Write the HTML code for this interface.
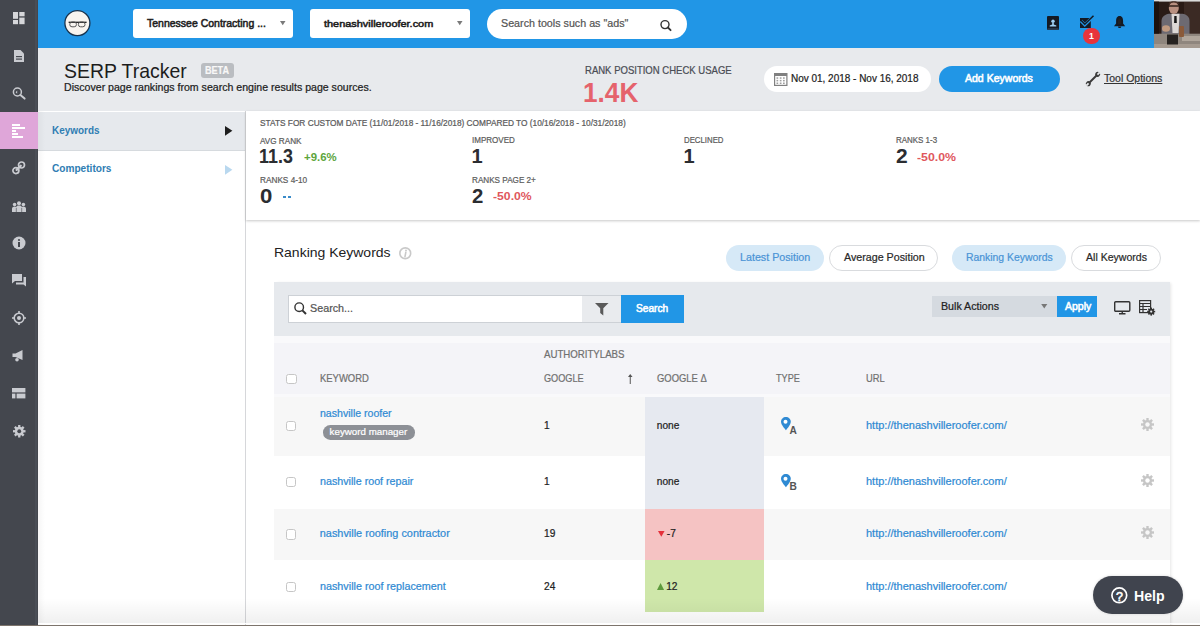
<!DOCTYPE html>
<html><head><meta charset="utf-8"><title>SERP Tracker</title>
<style>
html,body{margin:0;padding:0;width:1200px;height:626px;overflow:hidden;background:#fff;font-family:"Liberation Sans", sans-serif;}
.t{position:absolute;white-space:nowrap;line-height:1;transform-origin:0 0;}
.b{position:absolute;box-sizing:border-box;}
svg{position:absolute;overflow:visible;}
</style></head><body>
<div class="b" style="left:0px;top:0px;width:38px;height:626px;background:#44474e"></div>
<div class="b" style="left:35px;top:0px;width:2px;height:626px;background:#4a4e56"></div>
<div class="b" style="left:38px;top:0px;width:1162px;height:48px;background:#2196e6"></div>
<div class="b" style="left:38px;top:48px;width:1162px;height:63px;background:#e8eaed"></div>
<div class="b" style="left:38px;top:111px;width:208px;height:515px;background:#fff;border-right:1px solid #d6d7da"></div>
<div class="b" style="left:38px;top:112px;width:207px;height:39px;background:#e6e9ed;border-bottom:1px solid #d6dade"></div>
<div class="b" style="left:38px;top:111px;width:7px;height:515px;background:linear-gradient(90deg,rgba(0,0,0,0.035),rgba(0,0,0,0))"></div>
<div class="b" style="left:246px;top:111px;width:954px;height:109px;background:#fff;box-shadow:0 1px 2.5px rgba(0,0,0,.22)"></div>
<div class="b" style="left:0px;top:112px;width:38px;height:37px;background:#dfa6d9"></div>
<svg style="left:12.75px;top:11.8px" width="11.6" height="12.2" viewBox="0 0 11.6 12.2"><g fill="#d6d7da"><rect x="0" y="0" width="5" height="6.8"/><rect x="6.3" y="0" width="5.3" height="4.3"/><rect x="0" y="8" width="5" height="4.2"/><rect x="6.3" y="5.6" width="5.3" height="6.6"/></g></svg>
<svg style="left:14px;top:50px" width="10" height="12" viewBox="0 0 10 12"><path d="M0 0H6.5L10 3.5V12H0Z" fill="#c9cbd0"/><rect x="2" y="6" width="6" height="1.2" fill="#44474e"/><rect x="2" y="8.5" width="6" height="1.2" fill="#44474e"/></svg>
<svg style="left:12px;top:86px" width="14" height="14" viewBox="0 0 14 14"><circle cx="5.4" cy="6" r="4" fill="none" stroke="#c9cbd0" stroke-width="1.5"/><path d="M8.4 9L12.6 12.6" stroke="#c9cbd0" stroke-width="2" stroke-linecap="round"/><path d="M3.6 6.2L5.2 4.6V7.8Z" fill="#c9cbd0"/></svg>
<svg style="left:12px;top:124px" width="13" height="14" viewBox="0 0 13 14"><rect x="0" y="0" width="8" height="2" fill="#fff"/><rect x="0" y="3" width="13" height="2" fill="#fff"/><rect x="0" y="6" width="4" height="2" fill="#fff"/><rect x="0" y="9" width="6" height="2" fill="#fff"/><rect x="0" y="12" width="11" height="2" fill="#fff"/></svg>
<svg style="left:12px;top:161px" width="14" height="14" viewBox="0 0 14 14"><g fill="none" stroke="#c9cbd0" stroke-width="1.7"><circle cx="3.9" cy="9.6" r="3"/><circle cx="9.5" cy="4" r="3"/></g><path d="M4.6 8.9L8.8 4.7" stroke="#c9cbd0" stroke-width="2.2" stroke-linecap="round"/></svg>
<svg style="left:11.5px;top:200.8px" width="14" height="11" viewBox="0 0 14 11"><g fill="#c9cbd0"><circle cx="2.6" cy="3.6" r="1.8"/><circle cx="7" cy="2.2" r="2"/><circle cx="11.4" cy="3.6" r="1.8"/><path d="M0 11V7.6C0 6.4 1 5.8 2.6 5.8C4.2 5.8 5 6.4 5 7.6V11Z"/><path d="M9 11V7.6C9 6.4 9.8 5.8 11.4 5.8C13 5.8 14 6.4 14 7.6V11Z"/><path d="M4.2 11V6.4C4.2 5 5.2 4.4 7 4.4C8.8 4.4 9.8 5 9.8 6.4V11Z"/></g><path d="M4.3 7V11M9.7 7V11" stroke="#44474e" stroke-width="0.6"/></svg>
<svg style="left:12px;top:236px" width="14" height="14" viewBox="0 0 14 14"><circle cx="7" cy="7" r="6.5" fill="#c9cbd0"/><rect x="6" y="6" width="2" height="5" fill="#44474e"/><circle cx="7" cy="4" r="1.1" fill="#44474e"/></svg>
<svg style="left:12px;top:274px" width="14" height="13" viewBox="0 0 14 13"><path d="M0 0H10V7H3L0 9.5Z" fill="#c9cbd0"/><path d="M11.5 3H14V12.5L11.5 10.5H4V8.5H11.5Z" fill="#c9cbd0"/></svg>
<svg style="left:12px;top:311px" width="14" height="14" viewBox="0 0 14 14"><circle cx="7" cy="7" r="4.8" fill="none" stroke="#c9cbd0" stroke-width="1.6"/><circle cx="7" cy="7" r="2" fill="#c9cbd0"/><path d="M7 0V2.5M7 11.5V14M0 7H2.5M11.5 7H14" stroke="#c9cbd0" stroke-width="1.6"/></svg>
<svg style="left:12px;top:350px" width="13" height="12" viewBox="0 0 13 12"><path d="M0.5 3.5H3.5L10.5 0V10L3.5 7H0.5Z" fill="#c9cbd0"/><circle cx="5" cy="9.8" r="1.8" fill="#c9cbd0"/></svg>
<svg style="left:12px;top:387.8px" width="13.4" height="10.4" viewBox="0 0 13.4 10.4"><rect x="0" y="0" width="13.4" height="4.4" fill="#c9cbd0"/><rect x="0" y="5.6" width="3.4" height="4.8" fill="#c9cbd0"/><rect x="4.6" y="5.6" width="8.8" height="4.8" fill="#c9cbd0"/></svg>
<svg style="left:12.5px;top:424.5px" width="12.5" height="12.5" viewBox="0 0 13 13"><g fill="#c9cbd0"><circle cx="6.5" cy="6.5" r="4.6"/><rect x="5.3" y="0" width="2.4" height="13"/><rect x="5.3" y="0" width="2.4" height="13" transform="rotate(45 6.5 6.5)"/><rect x="5.3" y="0" width="2.4" height="13" transform="rotate(90 6.5 6.5)"/><rect x="5.3" y="0" width="2.4" height="13" transform="rotate(135 6.5 6.5)"/></g><circle cx="6.5" cy="6.5" r="2" fill="#44474e"/></svg>
<svg style="left:64px;top:10px" width="27" height="27" viewBox="0 0 27 27"><circle cx="13.4" cy="13.1" r="12.5" fill="#f8f4ef" stroke="#17324d" stroke-width="1.3"/><path d="M4.6 12.3H22.6" stroke="#1e1e1e" stroke-width="1.3"/><rect x="5.8" y="12" width="6.6" height="4.8" rx="2.2" fill="none" stroke="#555" stroke-width="1"/><rect x="14.4" y="12" width="6.6" height="4.8" rx="2.2" fill="none" stroke="#555" stroke-width="1"/></svg>
<div class="b" style="left:133px;top:9px;width:160px;height:29px;background:#fff;border-radius:3px"></div>
<div class="t" style="left:146.90px;top:18.00px;font-size:11.05px;font-weight:400;color:#1f1f1f;transform:scaleX(0.9494);-webkit-text-stroke:0.55px #1f1f1f;">Tennessee Contracting ...</div>
<svg style="left:280px;top:21px" width="5.5" height="4.3" viewBox="0 0 8 6"><path d="M0 0H8L4 6Z" fill="#7a7a7a"/></svg>
<div class="b" style="left:310px;top:9px;width:160px;height:29px;background:#fff;border-radius:3px"></div>
<div class="t" style="left:324.10px;top:19.00px;font-size:9.92px;font-weight:400;color:#1f1f1f;transform:scaleX(1.1025);-webkit-text-stroke:0.55px #1f1f1f;">thenashvilleroofer.com</div>
<svg style="left:457.4px;top:21.3px" width="5.5" height="4.3" viewBox="0 0 8 6"><path d="M0 0H8L4 6Z" fill="#7a7a7a"/></svg>
<div class="b" style="left:487px;top:9px;width:200px;height:30px;background:#fff;border-radius:15px"></div>
<div class="t" style="left:500.80px;top:18.00px;font-size:11.05px;font-weight:400;color:#555;transform:scaleX(0.9698);-webkit-text-stroke:0.22px #555;">Search tools such as "ads"</div>
<svg style="left:660px;top:19.5px" width="13" height="10.5" viewBox="0 0 13 10.5"><circle cx="5" cy="4.6" r="4" fill="none" stroke="#333" stroke-width="1.4"/><path d="M7.9 7.5L10.6 10.2" stroke="#333" stroke-width="1.8" stroke-linecap="round"/></svg>
<svg style="left:1047px;top:15.5px" width="12" height="14" viewBox="0 0 12 14"><rect x="0" y="0" width="12" height="14" rx="1" fill="#141a24"/><rect x="0.5" y="12.6" width="11" height="0.9" fill="#3a5a7a"/><circle cx="6" cy="5.2" r="1.7" fill="#9fd0f4"/><path d="M5.2 6.8H6.8V8.6L9.3 9.6V10.6H2.7V9.6L5.2 8.6Z" fill="#9fd0f4"/></svg>
<svg style="left:1079.5px;top:15.5px" width="14" height="12.5" viewBox="0 0 14 12.5"><rect x="0" y="2" width="10.8" height="10" fill="#141a24"/><path d="M1 4.8L4.8 8.8L13.2 0.6" fill="none" stroke="#2196e6" stroke-width="3.2"/><path d="M1 4.2L4.8 8.2L13.5 -0.3" fill="none" stroke="#141a24" stroke-width="1.5"/></svg>
<div class="b" style="left:1083.2px;top:27.8px;width:16.5px;height:16.5px;background:#e8343c;border-radius:50%"></div>
<div class="t" style="left:1089.00px;top:32.00px;font-size:8.72px;font-weight:700;color:#fff;">1</div>
<svg style="left:1114px;top:15.9px" width="11.2" height="12" viewBox="0 0 11.2 12"><path d="M5.6 0C8.3 0 9.1 2.4 9.1 5V7.6L11.2 10.2H0L2.1 7.6V5C2.1 2.4 2.9 0 5.6 0Z" fill="#141a24"/><path d="M4 10.5H7.2C7.2 11.5 6.5 12 5.6 12C4.7 12 4 11.5 4 10.5Z" fill="#141a24"/><path d="M5.6 2.5C7 2.5 7.2 4 7.2 5.5V8H4V5.5C4 4 4.2 2.5 5.6 2.5Z" fill="#2a241f" opacity="0.6"/></svg>
<svg style="left:1154px;top:0px" width="46" height="48" viewBox="0 0 46 48">
<rect width="46" height="48" fill="#2a1b16"/>
<rect x="30" y="2" width="16" height="32" fill="#3b2a24"/>
<rect x="0" y="0" width="46" height="1.6" fill="#dcdcdc"/>
<path d="M7.5 34V21C7.5 16.5 11 14.5 15 13.8H28.5C32.5 14.5 35.5 16.5 35.5 21V34Z" fill="#6d6a72"/>
<path d="M17.5 13.8H25.5L24.5 33H18.5Z" fill="#dcd8d6"/>
<path d="M20.3 16H22.6L22.8 23H20.1Z" fill="#161616"/>
<ellipse cx="19.8" cy="8" rx="5" ry="6" fill="#b89080"/>
<rect x="14.8" y="5.2" width="10" height="1.6" fill="#3a2a22"/>
<path d="M14.8 5C15 1.5 24.6 1.5 24.8 5V3C23 0.8 16.6 0.8 14.8 3Z" fill="#4a3228"/>
<rect x="0" y="33.7" width="46" height="14.3" fill="#8f867e"/>
<rect x="28" y="36" width="18" height="5" fill="#b0a69c"/>
<rect x="0" y="44" width="46" height="4" fill="#a59a90"/>
<rect x="13" y="34.5" width="11" height="10" fill="#262220"/>
<ellipse cx="12" cy="28.5" rx="4" ry="3.2" fill="#c09a80"/>
<rect x="25" y="26" width="5" height="11" rx="1" fill="#8a5a3a"/>
<rect x="0" y="1.6" width="5" height="32" fill="#1c120e"/>
</svg>
<div class="t" style="left:63.70px;top:61.00px;font-size:20.49px;font-weight:400;color:#1c1c1c;transform:scaleX(0.9485);">SERP Tracker</div>
<div class="b" style="left:201px;top:63px;width:32.5px;height:14.5px;background:#babdc1;border-radius:3px"></div>
<div class="t" style="left:205.30px;top:66.00px;font-size:10.47px;font-weight:700;color:#f8f8f8;transform:scaleX(0.8674);-webkit-text-stroke:0.2px #f8f8f8">BETA</div>
<div class="t" style="left:63.75px;top:83.00px;font-size:10.17px;font-weight:400;color:#222;transform:scaleX(1.0419);-webkit-text-stroke:0.22px #222;">Discover page rankings from search engine results page sources.</div>
<div class="t" style="left:584.80px;top:66.00px;font-size:10.32px;font-weight:400;color:#4a4d55;transform:scaleX(0.9242);-webkit-text-stroke:0.22px #4a4d55;">RANK POSITION CHECK USAGE</div>
<div class="t" style="left:583.46px;top:79.00px;font-size:27.76px;font-weight:700;color:#e5636c;transform:scaleX(0.9448);">1.4K</div>
<div class="b" style="left:764px;top:66px;width:167px;height:26px;background:#fff;border-radius:13px"></div>
<svg style="left:774px;top:73px" width="13.5" height="13" viewBox="0 0 13.5 13"><rect x="0.6" y="0.6" width="12.3" height="11.8" fill="#fff" stroke="#808080" stroke-width="1.2"/><rect x="0.6" y="0.6" width="12.3" height="2.4" fill="#808080"/><g fill="#a0a0a0"><rect x="2.5" y="4.3" width="1.7" height="1.5"/><rect x="5.8" y="4.3" width="1.7" height="1.5"/><rect x="9" y="4.3" width="1.7" height="1.5"/><rect x="2.5" y="6.9" width="1.7" height="1.5"/><rect x="5.8" y="6.9" width="1.7" height="1.5"/><rect x="9" y="6.9" width="1.7" height="1.5"/><rect x="2.5" y="9.5" width="1.7" height="1.5"/><rect x="5.8" y="9.5" width="1.7" height="1.5"/><rect x="9" y="9.5" width="1.7" height="1.5"/></g></svg>
<div class="t" style="left:790.50px;top:74.00px;font-size:10.32px;font-weight:400;color:#222;transform:scaleX(0.9664);-webkit-text-stroke:0.22px #222;">Nov 01, 2018 - Nov 16, 2018</div>
<div class="b" style="left:938.5px;top:66px;width:121.5px;height:26px;background:#2196e6;border-radius:13px"></div>
<div class="t" style="left:965.40px;top:73.00px;font-size:10.76px;font-weight:400;color:#fff;transform:scaleX(0.9791);-webkit-text-stroke:0.55px #fff;">Add Keywords</div>
<svg style="left:1086px;top:72px" width="14" height="14" viewBox="0 0 14 14"><g transform="translate(7 7) rotate(-45)"><rect x="-6" y="-0.95" width="12" height="1.9" fill="#3a3a3a"/><circle cx="-6.6" cy="0" r="2.5" fill="#3a3a3a"/><circle cx="6.6" cy="0" r="2.5" fill="#3a3a3a"/><rect x="-9.5" y="-0.9" width="3.2" height="1.8" fill="#e8eaed"/><rect x="6.3" y="-0.9" width="3.2" height="1.8" fill="#e8eaed"/></g></svg>
<div class="t" style="left:1103.80px;top:73.00px;font-size:10.61px;font-weight:400;color:#333;transform:scaleX(0.9886);-webkit-text-stroke:0.22px #333;text-decoration:underline;text-underline-offset:1px">Tool Options</div>
<div class="t" style="left:51.70px;top:126.00px;font-size:10.47px;font-weight:700;color:#2f7db3;transform:scaleX(0.9492);">Keywords</div>
<svg style="left:224.8px;top:126.3px" width="7.4" height="9.7" viewBox="0 0 7.4 9.7"><path d="M0 0L7.4 4.85L0 9.7Z" fill="#1e1e1e"/></svg>
<div class="t" style="left:51.70px;top:164.00px;font-size:10.17px;font-weight:700;color:#2f7db3;transform:scaleX(0.9940);">Competitors</div>
<svg style="left:224.8px;top:164.8px" width="7.4" height="9.7" viewBox="0 0 7.4 9.7"><path d="M0 0L7.4 4.85L0 9.7Z" fill="#b9d8ef"/></svg>
<div class="t" style="left:259.80px;top:120.00px;font-size:8.14px;font-weight:400;color:#5c5c5c;transform:scaleX(1.0213);-webkit-text-stroke:0.22px #5c5c5c;">STATS FOR CUSTOM DATE (11/01/2018 - 11/16/2018) COMPARED TO (10/16/2018 - 10/31/2018)</div>
<div class="t" style="left:259.80px;top:137.00px;font-size:8.58px;font-weight:400;color:#5c5c5c;transform:scaleX(0.9498);-webkit-text-stroke:0.22px #5c5c5c;">AVG RANK</div>
<div class="t" style="left:259.11px;top:146.00px;font-size:20.06px;font-weight:700;color:#2b2d31;transform:scaleX(0.8922);">11.3</div>
<div class="t" style="left:303.50px;top:152.00px;font-size:10.90px;font-weight:700;color:#5da53c;transform:scaleX(1.0476);">+9.6%</div>
<div class="t" style="left:471.60px;top:136.00px;font-size:8.58px;font-weight:400;color:#5c5c5c;transform:scaleX(0.9365);-webkit-text-stroke:0.22px #5c5c5c;">IMPROVED</div>
<div class="t" style="left:471.50px;top:146.00px;font-size:20.06px;font-weight:700;color:#2b2d31;">1</div>
<div class="t" style="left:683.75px;top:136.00px;font-size:8.58px;font-weight:400;color:#5c5c5c;transform:scaleX(0.9104);-webkit-text-stroke:0.22px #5c5c5c;">DECLINED</div>
<div class="t" style="left:683.50px;top:146.00px;font-size:20.06px;font-weight:700;color:#2b2d31;">1</div>
<div class="t" style="left:895.75px;top:136.00px;font-size:8.58px;font-weight:400;color:#5c5c5c;transform:scaleX(0.9271);-webkit-text-stroke:0.22px #5c5c5c;">RANKS 1-3</div>
<div class="t" style="left:895.75px;top:146.00px;font-size:20.06px;font-weight:700;color:#2b2d31;transform:scaleX(1.0455);">2</div>
<div class="t" style="left:917.00px;top:152.00px;font-size:11.05px;font-weight:700;color:#e0575d;transform:scaleX(1.1168);">-50.0%</div>
<div class="t" style="left:259.80px;top:176.00px;font-size:8.87px;font-weight:400;color:#5c5c5c;transform:scaleX(0.9293);-webkit-text-stroke:0.22px #5c5c5c;">RANKS 4-10</div>
<div class="t" style="left:260.20px;top:186.00px;font-size:20.35px;font-weight:700;color:#2b2d31;transform:scaleX(1.0909);">0</div>
<div class="b" style="left:282.5px;top:196px;width:3.6px;height:1.6px;background:#3a8bc9"></div>
<div class="b" style="left:287.9px;top:196px;width:3.6px;height:1.6px;background:#3a8bc9"></div>
<div class="t" style="left:471.60px;top:176.00px;font-size:8.87px;font-weight:400;color:#5c5c5c;transform:scaleX(0.9187);-webkit-text-stroke:0.22px #5c5c5c;">RANKS PAGE 2+</div>
<div class="t" style="left:472.00px;top:186.00px;font-size:20.35px;font-weight:700;color:#2b2d31;">2</div>
<div class="t" style="left:493.40px;top:191.00px;font-size:11.19px;font-weight:700;color:#e0575d;transform:scaleX(1.0902);">-50.0%</div>
<div class="t" style="left:274.20px;top:246.00px;font-size:13.30px;font-weight:400;color:#222;transform:scaleX(1.0514);">Ranking Keywords</div>
<svg style="left:398.5px;top:247px" width="12.5" height="12.5" viewBox="0 0 12.5 12.5"><circle cx="6.25" cy="6.25" r="5.4" fill="none" stroke="#c9c9c9" stroke-width="1.6"/><path d="M6.8 5.4L6 9.6" stroke="#c9c9c9" stroke-width="1.6" stroke-linecap="round"/><circle cx="7" cy="3.5" r="0.95" fill="#c9c9c9"/></svg>
<div class="b" style="left:725.6px;top:245.25px;width:98.39999999999998px;height:25.25px;background:#d6e9f7;border-radius:13px"></div>
<div class="t" style="left:740.25px;top:252.00px;font-size:10.90px;font-weight:400;color:#4a94d6;transform:scaleX(0.9828);-webkit-text-stroke:0.22px #4a94d6;">Latest Position</div>
<div class="b" style="left:828.75px;top:245.25px;width:109.64999999999998px;height:25.25px;background:#fff;border:1px solid #d9dbde;border-radius:13px"></div>
<div class="t" style="left:843.75px;top:252.00px;font-size:10.90px;font-weight:400;color:#2a2a2a;transform:scaleX(0.9820);-webkit-text-stroke:0.22px #2a2a2a;">Average Position</div>
<div class="b" style="left:951.6px;top:245.25px;width:114.89999999999998px;height:25.25px;background:#d6e9f7;border-radius:13px"></div>
<div class="t" style="left:965.60px;top:252.00px;font-size:10.90px;font-weight:400;color:#4a94d6;transform:scaleX(0.9545);-webkit-text-stroke:0.22px #4a94d6;">Ranking Keywords</div>
<div class="b" style="left:1071px;top:245.25px;width:89.59999999999991px;height:25.25px;background:#fff;border:1px solid #d9dbde;border-radius:13px"></div>
<div class="t" style="left:1085.60px;top:252.00px;font-size:10.90px;font-weight:400;color:#2a2a2a;transform:scaleX(0.9685);-webkit-text-stroke:0.22px #2a2a2a;">All Keywords</div>
<div class="b" style="left:274px;top:282px;width:896px;height:360px;box-shadow:2px 0 3px -1px rgba(0,0,0,.10)"></div>
<div class="b" style="left:274px;top:282px;width:896px;height:54px;background:#e6e9ed"></div>
<div class="b" style="left:288px;top:295px;width:294px;height:28px;background:#fff;border:1px solid #cdd1d6;border-right:none"></div>
<svg style="left:293.5px;top:301.5px" width="13" height="13" viewBox="0 0 13 13"><circle cx="5.2" cy="5.2" r="4.3" fill="none" stroke="#333" stroke-width="1.4"/><path d="M8.4 8.4L12 12" stroke="#333" stroke-width="2"/></svg>
<div class="t" style="left:310.00px;top:303.00px;font-size:10.90px;font-weight:400;color:#555;transform:scaleX(0.9872);-webkit-text-stroke:0.22px #555;">Search...</div>
<div class="b" style="left:582px;top:295px;width:39px;height:28px;background:#e9ebee;border-top:1px solid #cdd1d6;border-bottom:1px solid #cdd1d6"></div>
<svg style="left:594.5px;top:302.5px" width="13.5" height="12.5" viewBox="0 0 13.5 12.5"><path d="M0 0H13.5L8.3 5.2V12.5L5.2 10V5.2Z" fill="#5a5a5a"/></svg>
<div class="b" style="left:621px;top:295px;width:62.5px;height:28px;background:#2196e6"></div>
<div class="t" style="left:636.20px;top:304.00px;font-size:10.47px;font-weight:400;color:#fff;transform:scaleX(0.9698);-webkit-text-stroke:0.55px #fff;">Search</div>
<div class="b" style="left:932.3px;top:296px;width:124.7px;height:21px;background:#d5dae0"></div>
<div class="t" style="left:941.20px;top:301.00px;font-size:10.76px;font-weight:400;color:#222;transform:scaleX(0.9902);-webkit-text-stroke:0.22px #222;">Bulk Actions</div>
<svg style="left:1040.5px;top:304px" width="6.5" height="4.6" viewBox="0 0 8 6"><path d="M0 0H8L4 6Z" fill="#777"/></svg>
<div class="b" style="left:1057px;top:296px;width:39.8px;height:21px;background:#2196e6"></div>
<div class="t" style="left:1065.30px;top:301.00px;font-size:10.76px;font-weight:400;color:#fff;transform:scaleX(0.9740);-webkit-text-stroke:0.55px #fff;">Apply</div>
<svg style="left:1113.5px;top:300.8px" width="16.5" height="13.5" viewBox="0 0 16.5 13.5"><rect x="0.7" y="0.7" width="15.1" height="9.6" rx="1" fill="none" stroke="#333" stroke-width="1.4"/><path d="M8.25 10.5V12.5M5 12.8H11.5" stroke="#333" stroke-width="1.4"/></svg>
<svg style="left:1139px;top:299.7px" width="16" height="15.5" viewBox="0 0 16 15.5"><rect x="0.6" y="0.6" width="11" height="12" fill="none" stroke="#333" stroke-width="1.2"/><path d="M0.6 3.5H11.6M0.6 6.5H11.6M0.6 9.5H8M4 3.5V12.6" stroke="#333" stroke-width="1.2"/><g fill="#333"><circle cx="12.2" cy="11.6" r="2.9"/><rect x="11.4" y="7.6" width="1.6" height="8"/><rect x="11.4" y="7.6" width="1.6" height="8" transform="rotate(45 12.2 11.6)"/><rect x="11.4" y="7.6" width="1.6" height="8" transform="rotate(90 12.2 11.6)"/><rect x="11.4" y="7.6" width="1.6" height="8" transform="rotate(135 12.2 11.6)"/></g><circle cx="12.2" cy="11.6" r="1.1" fill="#e6e9ed"/></svg>
<div class="b" style="left:274px;top:336px;width:896px;height:61px;background:#f9f9fb"></div>
<div class="b" style="left:274px;top:343px;width:896px;height:51px;background:#f4f4f8"></div>
<div class="t" style="left:544.30px;top:350.00px;font-size:10.47px;font-weight:400;color:#707070;transform:scaleX(0.9225);-webkit-text-stroke:0.22px #707070;">AUTHORITYLABS</div>
<div class="b" style="left:286.2px;top:373.5px;width:10.5px;height:10.5px;background:#fff;border:1px solid #c6c6c6;border-radius:2.5px"></div>
<div class="t" style="left:319.75px;top:373.00px;font-size:10.90px;font-weight:400;color:#707070;transform:scaleX(0.8687);-webkit-text-stroke:0.22px #707070;">KEYWORD</div>
<div class="t" style="left:544.30px;top:373.00px;font-size:10.90px;font-weight:400;color:#707070;transform:scaleX(0.8404);-webkit-text-stroke:0.22px #707070;">GOOGLE</div>
<svg style="left:627.5px;top:373.75px" width="4.5" height="10" viewBox="0 0 4.5 10"><path d="M2.25 1V10" stroke="#555" stroke-width="1"/><path d="M0 3L2.25 0L4.5 3Z" fill="#555"/></svg>
<div class="t" style="left:656.50px;top:373.00px;font-size:10.90px;font-weight:400;color:#707070;transform:scaleX(0.8649);-webkit-text-stroke:0.22px #707070;">GOOGLE &#916;</div>
<div class="t" style="left:776.40px;top:373.00px;font-size:10.90px;font-weight:400;color:#707070;transform:scaleX(0.8375);-webkit-text-stroke:0.22px #707070;">TYPE</div>
<div class="t" style="left:866.00px;top:373.00px;font-size:10.90px;font-weight:400;color:#707070;transform:scaleX(0.8560);-webkit-text-stroke:0.22px #707070;">URL</div>
<div class="b" style="left:274px;top:397px;width:896px;height:58.5px;background:#f7f7f7"></div>
<div class="b" style="left:644.5px;top:397px;width:119.5px;height:58.5px;background:#e6e9f0"></div>
<div class="b" style="left:285.8px;top:420.6px;width:10.5px;height:10.5px;background:#fff;border:1px solid #c6c6c6;border-radius:2.5px"></div>
<div class="t" style="left:320.00px;top:408.00px;font-size:10.89px;font-weight:400;color:#2f8ad3;transform:scaleX(0.9713);-webkit-text-stroke:0.22px #2f8ad3;">nashville roofer</div>
<div class="b" style="left:322.9px;top:425px;width:92px;height:14.7px;background:#8d9096;border-radius:7.35px"></div>
<div class="t" style="left:329.60px;top:427.00px;font-size:9.78px;font-weight:400;color:#fff;-webkit-text-stroke:0.22px #fff;">keyword manager</div>
<div class="t" style="left:544.00px;top:421.00px;font-size:10.17px;font-weight:400;color:#222;-webkit-text-stroke:0.22px #222;">1</div>
<div class="t" style="left:656.80px;top:421.00px;font-size:10.17px;font-weight:400;color:#222;-webkit-text-stroke:0.22px #222;">none</div>
<svg style="left:781.2px;top:417.25px" width="9.8" height="13.2" viewBox="0 0 9.8 13.2"><path d="M4.9 0C7.6 0 9.8 2.1 9.8 4.8C9.8 8 4.9 13.2 4.9 13.2C4.9 13.2 0 8 0 4.8C0 2.1 2.2 0 4.9 0Z" fill="#2f8ad3"/><circle cx="4.5" cy="4.7" r="2" fill="#fff"/></svg>
<div class="t" style="left:789.60px;top:426.00px;font-size:10.17px;font-weight:700;color:#555;">A</div>
<div class="t" style="left:865.80px;top:420.00px;font-size:10.89px;font-weight:400;color:#2f8ad3;transform:scaleX(1.0121);-webkit-text-stroke:0.22px #2f8ad3;">http://thenashvilleroofer.com/</div>
<svg style="left:1141px;top:417.75px" width="13" height="13" viewBox="0 0 13 13"><g fill="#c6c6c6"><circle cx="6.5" cy="6.5" r="4.6"/><rect x="5.3" y="0" width="2.4" height="13"/><rect x="5.3" y="0" width="2.4" height="13" transform="rotate(45 6.5 6.5)"/><rect x="5.3" y="0" width="2.4" height="13" transform="rotate(90 6.5 6.5)"/><rect x="5.3" y="0" width="2.4" height="13" transform="rotate(135 6.5 6.5)"/></g><circle cx="6.5" cy="6.5" r="2.2" fill="#f7f7f7"/></svg>
<div class="b" style="left:274px;top:455.5px;width:896px;height:53.0px;background:#fff"></div>
<div class="b" style="left:644.5px;top:455.5px;width:119.5px;height:53.0px;background:#e6e9f0"></div>
<div class="b" style="left:285.8px;top:476.8px;width:10.5px;height:10.5px;background:#fff;border:1px solid #c6c6c6;border-radius:2.5px"></div>
<div class="t" style="left:319.80px;top:476.00px;font-size:10.89px;font-weight:400;color:#2f8ad3;transform:scaleX(0.9845);-webkit-text-stroke:0.22px #2f8ad3;">nashville roof repair</div>
<div class="t" style="left:544.00px;top:477.00px;font-size:10.17px;font-weight:400;color:#222;-webkit-text-stroke:0.22px #222;">1</div>
<div class="t" style="left:656.80px;top:477.00px;font-size:10.17px;font-weight:400;color:#222;-webkit-text-stroke:0.22px #222;">none</div>
<svg style="left:781.2px;top:473.5px" width="9.8" height="13.2" viewBox="0 0 9.8 13.2"><path d="M4.9 0C7.6 0 9.8 2.1 9.8 4.8C9.8 8 4.9 13.2 4.9 13.2C4.9 13.2 0 8 0 4.8C0 2.1 2.2 0 4.9 0Z" fill="#2f8ad3"/><circle cx="4.5" cy="4.7" r="2" fill="#fff"/></svg>
<div class="t" style="left:789.60px;top:482.00px;font-size:10.17px;font-weight:700;color:#555;">B</div>
<div class="t" style="left:865.80px;top:476.00px;font-size:10.89px;font-weight:400;color:#2f8ad3;transform:scaleX(1.0121);-webkit-text-stroke:0.22px #2f8ad3;">http://thenashvilleroofer.com/</div>
<svg style="left:1141px;top:474px" width="13" height="13" viewBox="0 0 13 13"><g fill="#c6c6c6"><circle cx="6.5" cy="6.5" r="4.6"/><rect x="5.3" y="0" width="2.4" height="13"/><rect x="5.3" y="0" width="2.4" height="13" transform="rotate(45 6.5 6.5)"/><rect x="5.3" y="0" width="2.4" height="13" transform="rotate(90 6.5 6.5)"/><rect x="5.3" y="0" width="2.4" height="13" transform="rotate(135 6.5 6.5)"/></g><circle cx="6.5" cy="6.5" r="2.2" fill="#fff"/></svg>
<div class="b" style="left:274px;top:508.5px;width:896px;height:51.10000000000002px;background:#f7f7f7"></div>
<div class="b" style="left:644.5px;top:508.5px;width:119.5px;height:51.10000000000002px;background:#f5c3c3"></div>
<div class="b" style="left:285.8px;top:529.0px;width:10.5px;height:10.5px;background:#fff;border:1px solid #c6c6c6;border-radius:2.5px"></div>
<div class="t" style="left:319.80px;top:528.00px;font-size:10.89px;font-weight:400;color:#2f8ad3;-webkit-text-stroke:0.22px #2f8ad3;">nashville roofing contractor</div>
<div class="t" style="left:544.00px;top:529.00px;font-size:10.17px;font-weight:400;color:#222;-webkit-text-stroke:0.22px #222;">19</div>
<svg style="left:657.9px;top:531.0px" width="6.6" height="5.7" viewBox="0 0 6.6 5.7"><path d="M0 0H6.6L3.3 5.7Z" fill="#e5303a"/></svg>
<div class="t" style="left:666.80px;top:529.00px;font-size:10.17px;font-weight:400;color:#222;-webkit-text-stroke:0.22px #222;">-7</div>
<div class="t" style="left:865.80px;top:528.00px;font-size:10.89px;font-weight:400;color:#2f8ad3;transform:scaleX(1.0121);-webkit-text-stroke:0.22px #2f8ad3;">http://thenashvilleroofer.com/</div>
<svg style="left:1141px;top:526.2px" width="13" height="13" viewBox="0 0 13 13"><g fill="#c6c6c6"><circle cx="6.5" cy="6.5" r="4.6"/><rect x="5.3" y="0" width="2.4" height="13"/><rect x="5.3" y="0" width="2.4" height="13" transform="rotate(45 6.5 6.5)"/><rect x="5.3" y="0" width="2.4" height="13" transform="rotate(90 6.5 6.5)"/><rect x="5.3" y="0" width="2.4" height="13" transform="rotate(135 6.5 6.5)"/></g><circle cx="6.5" cy="6.5" r="2.2" fill="#f7f7f7"/></svg>
<div class="b" style="left:274px;top:559.6px;width:896px;height:52.69999999999993px;background:#fff"></div>
<div class="b" style="left:644.5px;top:559.6px;width:119.5px;height:52.69999999999993px;background:#cfe7aa"></div>
<div class="b" style="left:285.8px;top:581.6px;width:10.5px;height:10.5px;background:#fff;border:1px solid #c6c6c6;border-radius:2.5px"></div>
<div class="t" style="left:319.80px;top:581.00px;font-size:10.89px;font-weight:400;color:#2f8ad3;transform:scaleX(0.9904);-webkit-text-stroke:0.22px #2f8ad3;">nashville roof replacement</div>
<div class="t" style="left:544.00px;top:582.00px;font-size:10.17px;font-weight:400;color:#222;-webkit-text-stroke:0.22px #222;">24</div>
<svg style="left:657.2px;top:582.5999999999999px" width="7.1" height="7" viewBox="0 0 7.1 7"><path d="M0 7H7.1L3.55 0Z" fill="#5d9a3c"/></svg>
<div class="t" style="left:666.20px;top:582.00px;font-size:10.17px;font-weight:400;color:#222;-webkit-text-stroke:0.22px #222;">12</div>
<div class="t" style="left:865.80px;top:581.00px;font-size:10.89px;font-weight:400;color:#2f8ad3;transform:scaleX(1.0121);-webkit-text-stroke:0.22px #2f8ad3;">http://thenashvilleroofer.com/</div>
<div class="b" style="left:38px;top:598px;width:1162px;height:25px;background:linear-gradient(rgba(0,0,0,0),rgba(0,0,0,0.06))"></div>
<div class="b" style="left:38px;top:623px;width:1162px;height:1.2px;background:#fff"></div>
<div class="b" style="left:0px;top:624.5px;width:1200px;height:1.5px;background:#7d746c"></div>
<div class="b" style="left:1093.2px;top:576.4px;width:89.6px;height:37.9px;background:#40444e;border-radius:19px;box-shadow:0 0 3px rgba(0,0,0,.15)"></div>
<svg style="left:1111px;top:587.2px" width="16.6" height="16.6" viewBox="0 0 16.6 16.6"><circle cx="8.3" cy="8.3" r="7.4" fill="none" stroke="#fff" stroke-width="1.7"/></svg>
<div class="t" style="left:1115.90px;top:591.00px;font-size:12.79px;font-weight:400;color:#fff;transform:scaleX(0.9714);-webkit-text-stroke:0.55px #fff;">?</div>
<div class="t" style="left:1134.30px;top:590.00px;font-size:13.95px;font-weight:700;color:#fff;transform:scaleX(1.0138);">Help</div>
</body></html>
